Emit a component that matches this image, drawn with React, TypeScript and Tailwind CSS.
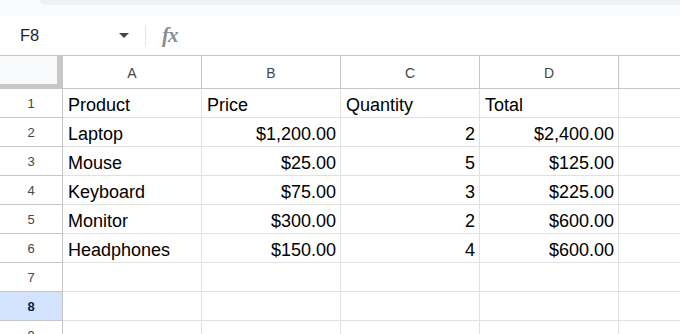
import React from 'react';

type Row = [string, string, string, string];

const rows: Row[] = [
  ['Product', 'Price', 'Quantity', 'Total'],
  ['Laptop', '$1,200.00', '2', '$2,400.00'],
  ['Mouse', '$25.00', '5', '$125.00'],
  ['Keyboard', '$75.00', '3', '$225.00'],
  ['Monitor', '$300.00', '2', '$600.00'],
  ['Headphones', '$150.00', '4', '$600.00'],
  ['', '', '', ''],
  ['', '', '', ''],
  ['', '', '', ''],
];

const cols = ['A', 'B', 'C', 'D'];

const Cell: React.FC<{ value: string; right: boolean }> = ({ value, right }) => (
  <div
    className={`w-[139px] shrink-0 h-[29px] border-r border-b border-[#e1e1e1] leading-[33px] text-[18px] text-black overflow-hidden whitespace-nowrap ${
      right ? 'text-right pr-[4px]' : 'text-left pl-[5px]'
    }`}
  >
    {value}
  </div>
);

const App: React.FC = () => {
  return (
    <div className="w-[680px] h-[334px] overflow-hidden bg-white font-['Liberation_Sans',Arial,sans-serif]">
      {/* top strip */}
      <div className="h-[16px] bg-[#f9fbfd]">
        <div className="ml-[40px] h-[5px] bg-[#eef2f7] rounded-bl-[10px]" />
      </div>

      {/* formula bar */}
      <div className="h-[40px] flex items-center border-b border-[#c4c7c5]">
        <div className="w-[145px] flex items-center pl-[20px] pr-[16px]">
          <span className="text-[16.5px] text-[#1f1f1f]">F8</span>
          <svg className="ml-auto" width="10" height="5" viewBox="0 0 10 5">
            <path d="M0 0h10L5 5z" fill="#444746" />
          </svg>
        </div>
        <div className="w-px h-[21px] bg-[#e3e3e3]" />
        <span className="ml-[16px] text-[21px] italic font-bold text-[#8a8d91] font-['Liberation_Serif',serif] tracking-[-1px]">
          fx
        </span>
      </div>

      {/* column header row */}
      <div className="flex h-[33px]">
        <div className="w-[63px] shrink-0 bg-[#f8f9fa] border-r-[6px] border-b-[5px] border-[#c7c7c7]" />
        {cols.map((c) => (
          <div
            key={c}
            className="w-[139px] shrink-0 border-r border-b border-[#c4c7c5] flex items-center justify-center text-[14px] text-[#444746] pt-[2px]"
          >
            {c}
          </div>
        ))}
        <div className="flex-1 border-b border-[#c4c7c5]" />
      </div>

      {/* data rows */}
      {rows.map((r, i) => {
        const sel = i === 7;
        return (
          <div key={i} className="flex">
            <div
              className={`w-[63px] shrink-0 h-[29px] border-r border-b border-[#c4c7c5] flex items-center justify-center text-[13px] pt-[1px] ${
                sel ? 'bg-[#d3e3fd] font-bold text-[#041e49]' : 'text-[#444746]'
              }`}
            >
              {i + 1}
            </div>
            {r.map((v, j) => (
              <Cell key={j} value={v} right={i > 0 && j > 0} />
            ))}
            <div className="flex-1 h-[29px] border-b border-[#e1e1e1]" />
          </div>
        );
      })}
    </div>
  );
};

export default App;
